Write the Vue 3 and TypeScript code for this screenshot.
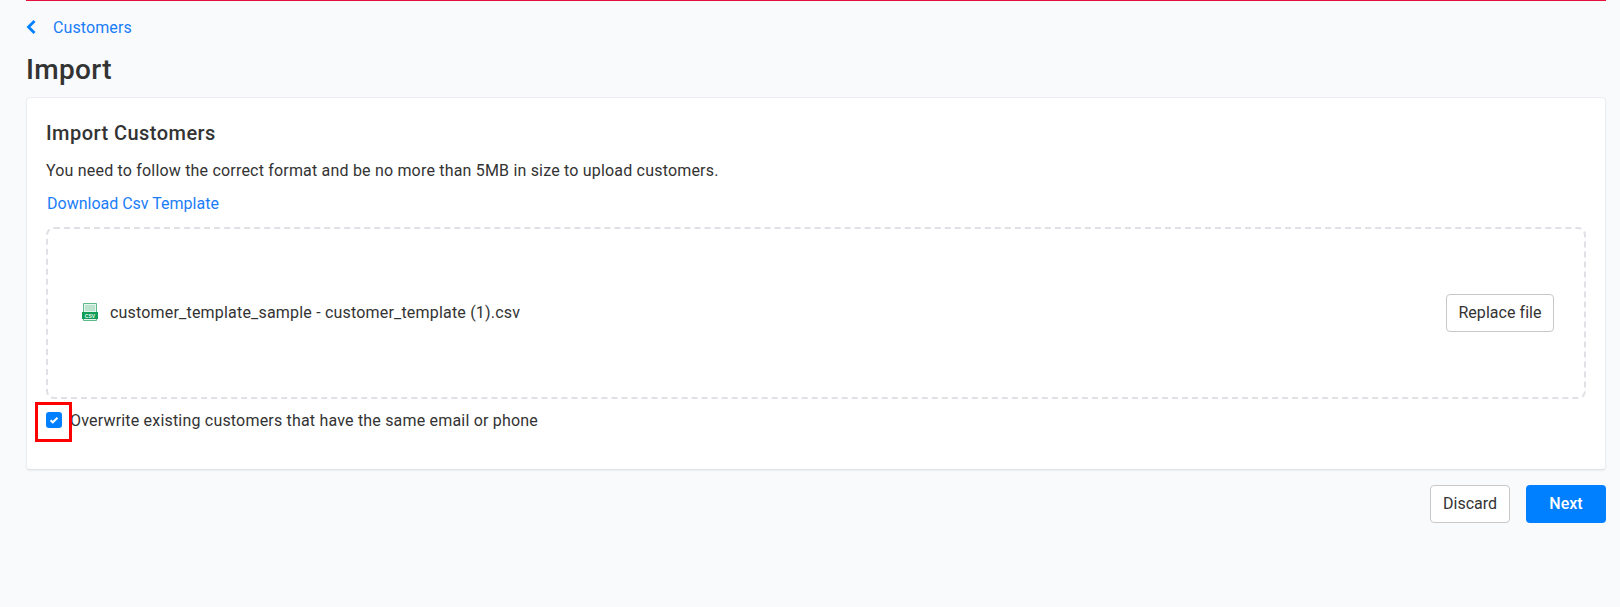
<script setup lang="ts">
const fileName: string = 'customer_template_sample - customer_template (1).csv'
</script>

<template>
  <div class="page">
    <div class="topline"></div>
    <a class="crumb">
      <svg class="chev" width="10" height="14" viewBox="0 0 10 14"><path d="M8.500 1 2.500 7 8.500 13" fill="none" stroke="#0080ff" stroke-width="2.800" /></svg>
      <span>Customers</span>
    </a>
    <h1 class="title">Import</h1>
    <section class="card">
      <h2 class="heading">Import Customers</h2>
      <p class="hint">You need to follow the correct format and be no more than 5MB in size to upload customers.</p>
      <a class="download">Download Csv Template</a>
      <div class="drop">
        <div class="file">
          <svg class="csv" width="16" height="18" viewBox="0 0 16 18">
            <path d="M1.500.500h13v17h-13z" fill="#e6f5ed" stroke="#5cb88a" />
            <path d="M3 3h10M3 5h10M3 7h10" stroke="#8fd0ae" stroke-width="1" />
            <path d="M0 9h16v7H0z" fill="#0f9d58" />
            <text x="8" y="14.600" text-anchor="middle" class="csv-label">CSV</text>
          </svg>
          <span>{{ fileName }}</span>
        </div>
        <button class="btn replace">Replace file</button>
      </div>
      <label class="check">
        <span class="box">
          <svg width="10" height="8" viewBox="0 0 10 8"><path d="M1.500 4.200 3.800 6.300 8.500 1.700" fill="none" stroke="#fff" stroke-width="2" /></svg>
        </span>
        <span>Overwrite existing customers that have the same email or phone</span>
        <i class="mark"></i>
      </label>
    </section>
    <div class="actions">
      <button class="btn discard">Discard</button>
      <button class="btn next">Next</button>
    </div>
  </div>
</template>

<style scoped>
.page { position: relative; box-sizing: border-box; height: 607px; padding: 0 14px 0 26px; background: #f9fafc; font-family: Roboto, sans-serif; color: #333; font-size: 16px; overflow: hidden; }
.topline { height: 1px; background: #e4103c; }
.crumb { display: flex; align-items: center; gap: 17px; height: 18px; margin-top: 17px; color: #1a7df8; font-size: 16px; letter-spacing: .1px; }
.chev { display: block; }
.title { margin: 17px 0 0; font-size: 28px; line-height: 34px; font-weight: 500; letter-spacing: .35px; color: #333; }
.card { box-sizing: border-box; height: 373px; margin-top: 10px; padding: 23px 19px 0; background: #fff; border: 1px solid #ebedf0; border-bottom-color: #dfe1e5; border-radius: 4px; box-shadow: 0 1px 2px rgba(0,0,0,.05); }
.heading { margin: 0; font-size: 20px; line-height: 24px; font-weight: 500; letter-spacing: .45px; color: #333; }
.hint { margin: 16px 0 0; line-height: 20px; letter-spacing: .19px; color: #333; }
.download { display: block; margin: 13px 0 0 1px; line-height: 20px; color: #1a7df8; }
.drop { box-sizing: border-box; display: flex; align-items: center; justify-content: space-between; height: 172px; margin-top: 13px; padding: 0 30px 0 34px; border: 2px dashed #dfe1e6; border-radius: 8px; }
.file { display: flex; align-items: center; gap: 12px; margin-bottom: 2px; color: #333; letter-spacing: .19px; }
.csv { display: block; }
.csv-label { font-family: "Liberation Sans", sans-serif; font-size: 5px; font-weight: 700; fill: #e8f7ef; letter-spacing: 0; }
.btn { font-family: inherit; font-size: 16px; border-radius: 4px; cursor: pointer; }
.replace { width: 108px; height: 38px; padding: 0 0 2px; background: #fff; border: 1px solid #c8c8c8; color: #333; letter-spacing: .05px; }
.check { position: relative; display: flex; align-items: center; gap: 8px; height: 22px; margin-top: 10px; color: #333; letter-spacing: .19px; }
.box { display: flex; align-items: center; justify-content: center; width: 16px; height: 16px; border-radius: 3px; background: #0080ff; }
.mark { position: absolute; left: -11px; top: -7px; width: 37px; height: 40px; box-sizing: border-box; border: 3px solid #f00; }
.actions { display: flex; justify-content: flex-end; gap: 16px; margin-top: 15px; }
.discard { width: 80px; height: 38px; padding: 0 0 2px; background: #fff; border: 1px solid #c8c8c8; color: #333; }
.next { width: 80px; height: 38px; padding: 0 0 2px; background: #0080ff; border: 0; color: #fff; font-weight: 500; }
</style>
